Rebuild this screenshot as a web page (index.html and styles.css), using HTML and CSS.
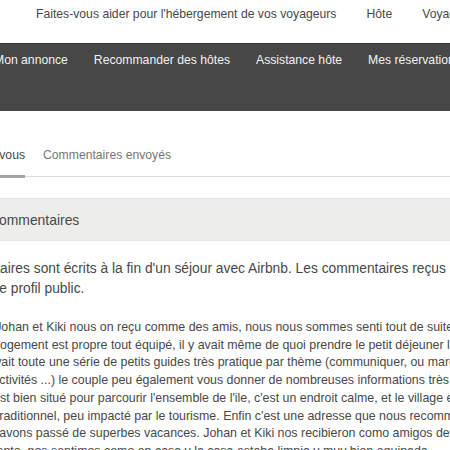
FILE: index.html
```html
<!DOCTYPE html>
<html lang="fr">
<head>
    <meta charset="UTF-8">
    <meta name="viewport" content="width=device-width, initial-scale=1.0">
    <title>Commentaires</title>
    <link rel="stylesheet" href="styles.css">
</head>
<body>
    <header class="topbar">
        <a href="#">Faites-vous aider pour l'hébergement de vos voyageurs</a>
        <a href="#">Hôte</a>
        <a href="#">Voyageur</a>
        <a href="#">Aide</a>
    </header>

    <nav class="subnav">
        <a href="#">Mon annonce</a>
        <a href="#">Recommander des hôtes</a>
        <a href="#">Assistance hôte</a>
        <a href="#">Mes réservations</a>
        <a href="#">Transactions</a>
    </nav>

    <main class="content">
        <div class="tabs">
            <a href="#" class="tab active">Commentaires sur vous</a>
            <a href="#" class="tab">Commentaires envoyés</a>
        </div>

        <section class="panel">
            <div class="panel-head"><span>Commentaires</span></div>

            <p class="intro">
                Les commentaires sont écrits à la fin d'un séjour avec Airbnb. Les commentaires reçus sont visibles<br>
                aussi sur votre profil public.
            </p>

            <!-- texte du commentaire, une ligne par <br> -->
            <p class="review">
                Oui, Johan et Kiki nous on reçu comme des amis, nous nous sommes senti tout de suite à l'aise.<br>
                Et le logement est propre tout équipé, il y avait même de quoi prendre le petit déjeuner le matin.<br>
                Il y avait toute une série de petits guides très pratique par thème (communiquer, ou marcher, sortir,<br>
                lire, activités ...) le couple peu également vous donner de nombreuses informations très utiles.<br>
                Et il est bien situé pour parcourir l'ensemble de l'ile, c'est un endroit calme, et le village est<br>
                bien traditionnel, peu impacté par le tourisme. Enfin c'est une adresse que nous recommandons, car<br>
                nous avons passé de superbes vacances. Johan et Kiki nos recibieron como amigos desde el primer<br>
                momento, nos sentimos como en casa y la casa estaba limpia y muy bien equipada.
            </p>
        </section>
    </main>
</body>
</html>
```

FILE: styles.css
```css
body {
    margin: 0;
    background-color: #ffffff;
    color: #484848;
    font-family: "Liberation Sans", Arial, sans-serif;
    overflow: hidden;
}

a {
    text-decoration: none;
}

.topbar {
    display: flex;
    gap: 30px;
    height: 43px;
    box-sizing: border-box;
    padding: 6px 0 0 36px;
    font-size: 12.2px;
    line-height: 17px;
    white-space: nowrap;
}

.topbar a {
    flex: none;
    color: #484848;
}

.subnav {
    display: flex;
    gap: 26px;
    height: 68px;
    box-sizing: border-box;
    padding-top: 8px;
    border-top: 1px solid #333333;
    background-color: #474747;
    font-size: 12.2px;
    line-height: 17px;
    white-space: nowrap;
}

.subnav a {
    flex: none;
    color: #f2f2f2;
}

.subnav a:first-child {
    margin-left: -6px;
}

.tabs {
    display: flex;
    gap: 18px;
    margin-top: 36px;
    border-bottom: 1px solid #dddddd;
    white-space: nowrap;
}

.tab {
    flex: none;
    padding-bottom: 11px;
    margin-bottom: -2px;
    border-bottom: 3px solid transparent;
    color: #767676;
    font-size: 12.2px;
    line-height: 17px;
}

.tab:first-child {
    margin-left: -8.5em;
}

.tab.active {
    color: #484848;
    border-bottom-color: #a3a3a3;
}

.panel {
    margin-top: 21px;
    white-space: nowrap;
}

.panel-head {
    padding: 11px 0 10px;
    background-color: #edeeeb;
    border-top: 1px solid #e4e6e2;
    border-bottom: 1px solid #e4e6e2;
    font-size: 13.9px;
    line-height: 20px;
}

.panel-head span {
    margin-left: -11px;
}

.intro {
    margin: 18px 0 0 -6em;
    font-size: 13.8px;
    line-height: 20px;
}

.review {
    margin: 20px 0 0 -2.5em;
    font-size: 12.4px;
    line-height: 17.7px;
}
```
